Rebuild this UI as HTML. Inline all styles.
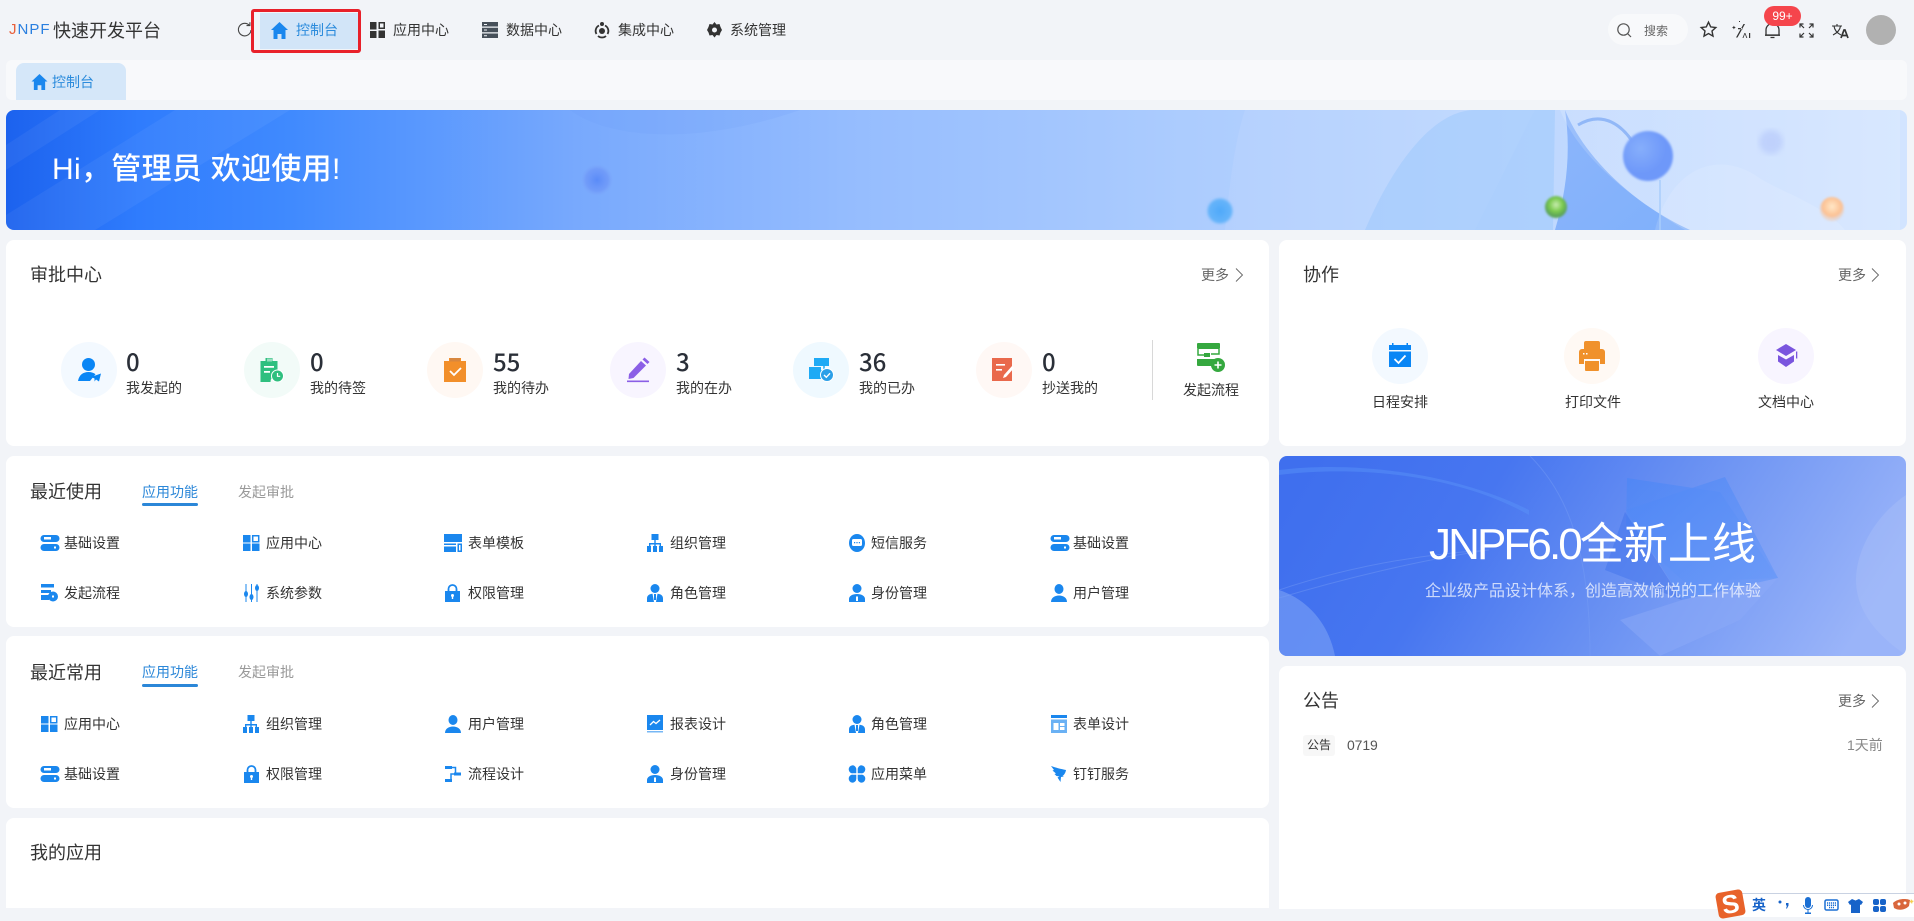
<!DOCTYPE html>
<html lang="zh-CN"><head><meta charset="utf-8"><title>JNPF 快速开发平台</title>
<style>
html,body{margin:0;padding:0}
body{width:1914px;height:917px;position:relative;overflow:hidden;background:#f2f4f8;font-family:"Liberation Sans","Noto Sans CJK SC",sans-serif;color:#333;font-size:14px}
.a,.t,svg.i{position:absolute}
.t{line-height:20px;white-space:nowrap}
.card{position:absolute;background:#fff;border-radius:8px}
.h{font-size:18px;line-height:24px}
.g{color:#666}
.n{font-size:24px;line-height:30px;color:#2a2f38;font-family:"Noto Sans CJK SC",sans-serif;font-weight:500}
svg.i{fill:#1a87ee;overflow:visible}
</style></head><body>

<!-- Top nav -->
<div class="t" style="left:9px;top:20px;font-size:15px;font-weight:400;letter-spacing:1px;color:#2a7fe0"><span style="color:#e8603c">J</span>NPF</div>
<div class="t" style="left:53px;top:21px;font-size:18px;color:#333">快速开发平台</div>
<svg class="i" style="left:237px;top:21px;fill:none;stroke:#444;stroke-width:1.1" width="15" height="18" viewBox="0 0 15 18"><path d="M12.5 4.5A6.3 6.3 0 1 0 14 9"/><path d="M9.5 4.6h3.4V1.2"/></svg>
<div class="a" style="left:251px;top:9px;width:104px;height:38px;border:3px solid #e8202a;border-radius:3px;background:#f2f4f8"></div>
<div class="a" style="left:260px;top:13px;width:98px;height:36px;background:#d2e5f8"></div>
<svg class="i" style="left:271px;top:22px" width="17" height="17" viewBox="0 0 17 17"><path d="M8.5 0 17 8h-2.500v9h-4v-5h-4v5h-4V8H0z"/></svg>
<div class="t" style="left:296px;top:20px;color:#2b8bdc">控制台</div>
<svg class="i" style="left:370px;top:22px;fill:#333" width="15" height="16" viewBox="0 0 15 16"><path d="M0 0h6.500v7.500H0zM8.500 0H15v7h-6.500zM0 9h6.500v7H0zM8.500 8.500H15V16h-6.500z"/><path fill="#f2f4f8" d="M10 1.500h3.500v4H10z"/></svg>
<div class="t" style="left:393px;top:20px">应用中心</div>
<svg class="i" style="left:482px;top:22px;fill:#47505a" width="16" height="16" viewBox="0 0 16 16"><path d="M0 0h16v4.500H0zM0 5.700h16v4.500H0zM0 11.500h16V16H0z"/><path fill="#f2f4f8" d="M2 2h3v1H2zM2 7.500h3v1H2zM2 13.300h3v1H2z"/></svg>
<div class="t" style="left:506px;top:20px">数据中心</div>
<svg class="i" style="left:594px;top:22px;fill:#333" width="16" height="16" viewBox="0 0 16 16"><circle cx="8" cy="9" r="3"/><path fill="none" stroke="#333" stroke-width="1.800" d="M5 3.500A6 6 0 0 0 2.500 12M11 3.500A6 6 0 0 1 13.500 12M4 14a6 6 0 0 0 8 0"/><circle cx="8" cy="2" r="2"/></svg>
<div class="t" style="left:618px;top:20px">集成中心</div>
<svg class="i" style="left:707px;top:22px;fill:#333" width="15" height="16" viewBox="0 0 15 16"><path d="M7.500 0l2 2.500 3-.5 1 3 1.500 3-1.500 2.500-1 3-3-.5-2 2.500-2-2.500-3 .5-1-3L0 8l1.500-3 1-3 3 .5z"/><circle cx="7.500" cy="8" r="2.500" fill="#f2f4f8"/></svg>
<div class="t" style="left:730px;top:20px">系统管理</div>

<div class="a" style="left:1608px;top:14px;width:80px;height:31px;border-radius:16px;background:#f8f9fb"></div>
<svg class="i" style="left:1617px;top:23px;fill:none;stroke:#555;stroke-width:1.200" width="15" height="15" viewBox="0 0 15 15"><circle cx="6.500" cy="6.500" r="5.700"/><path d="M10.700 10.700 14 14"/></svg>
<div class="t" style="left:1644px;top:21px;font-size:12px;color:#666">搜索</div>
<svg class="i" style="left:1700px;top:21px;fill:none;stroke:#333;stroke-width:1.400" width="17" height="17" viewBox="0 0 17 17"><path d="M8.500 1.200l2.200 4.700 5.100.6-3.800 3.500 1 5.100-4.500-2.600L4 15.100l1-5.100L1.200 6.500l5.100-.6z"/></svg>
<svg class="i" style="left:1732px;top:21px;fill:#333" width="19" height="18" viewBox="0 0 19 18"><path d="M0 6.500l1.300-.6.600-1.300.6 1.300 1.300.6-1.300.6-.6 1.300-.6-1.300zM7 0h1v1H7z"/><path d="M11.500 3 4 16.500h1.500L13 3zM6 7h5v1.200H6z"/><path d="M10.500 17l2-5h.8l2 5h-.9l-1.500-4-1.500 4zM17 12h1.200v5H17z"/></svg>
<svg class="i" style="left:1765px;top:22px;fill:none;stroke:#333;stroke-width:1.300" width="15" height="17" viewBox="0 0 15 17"><path d="M1 13V8a6.500 6.500 0 0 1 13 0v5z"/><path d="M0 13.200h15M5.500 15.500h4"/></svg>
<div class="a" style="left:1764px;top:6px;width:37px;height:20px;border-radius:10px;background:#f5454c;color:#fff;font-size:12px;line-height:20px;text-align:center">99+</div>
<svg class="i" style="left:1799px;top:23px;fill:none;stroke:#333;stroke-width:1.200" width="15" height="15" viewBox="0 0 15 15"><path d="M1 4.500V1h3.500M1 1l4 4M14 4.500V1h-3.500M14 1l-4 4M1 10.500V14h3.500M1 14l4-4M14 10.500V14h-3.500M14 14l-4-4"/></svg>
<svg class="i" style="left:1832px;top:24px;fill:none;stroke:#333;stroke-width:1.100" width="17" height="14" viewBox="0 0 17 14"><path d="M0 2h10M5 0v2M2 2c.5 4 3 7 7 9M8.500 2c-.5 4-3.500 7-7.500 9"/><path stroke-width="1.700" d="M9 14l3-8h1l3 8M10.300 11.500h4.400"/></svg>
<div class="a" style="left:1866px;top:15px;width:30px;height:30px;border-radius:50%;background:#b1b1b1"></div>

<!-- Tab bar -->
<div class="a" style="left:6px;top:60px;width:1901px;height:40px;background:#f8f9fb;border-radius:6px"></div>
<div class="a" style="left:16px;top:63px;width:110px;height:37px;background:#d5e7f9;border-radius:8px 8px 0 0"></div>
<svg class="i" style="left:31px;top:74px" width="17" height="16" viewBox="0 0 17 17"><path d="M8.500 0 17 8h-2.500v9h-4v-5h-4v5h-4V8H0z"/></svg>
<div class="t" style="left:52px;top:72px;color:#2b8bdc">控制台</div>

<!-- Banner -->
<svg class="a" style="left:6px;top:110px;border-radius:8px" width="1901" height="120" viewBox="6 110 1901 120">
<defs>
<linearGradient id="bg" x1="0" x2="1" y1="0" y2="0"><stop offset="0" stop-color="#1c62ee"/><stop offset=".07" stop-color="#2f7cfd"/><stop offset=".15" stop-color="#408afe"/><stop offset=".3" stop-color="#78a9fd"/><stop offset=".45" stop-color="#96bdfe"/><stop offset=".62" stop-color="#acccfe"/><stop offset="1" stop-color="#d2e4ff"/></linearGradient>
<linearGradient id="pet" x1="0" x2="1" y1="0" y2="1"><stop offset="0" stop-color="#8cb5fb"/><stop offset="1" stop-color="#7fb0fb"/></linearGradient>
<radialGradient id="s1"><stop offset="0" stop-color="#5a8bf8"/><stop offset=".7" stop-color="#6e97f8" stop-opacity=".75"/><stop offset="1" stop-color="#7aa2f8" stop-opacity="0"/></radialGradient>
<radialGradient id="s2"><stop offset="0" stop-color="#4fa9f9"/><stop offset=".8" stop-color="#66b4fa"/><stop offset="1" stop-color="#7abcfb" stop-opacity="0"/></radialGradient>
<radialGradient id="s3" cx=".5" cy=".4"><stop offset="0" stop-color="#c8ecb0"/><stop offset=".6" stop-color="#7ccb4e"/><stop offset="1" stop-color="#5da55a"/></radialGradient>
<radialGradient id="s4" cx=".5" cy=".4"><stop offset="0" stop-color="#ffe8c8"/><stop offset=".8" stop-color="#fcc092"/><stop offset="1" stop-color="#f5c6a4" stop-opacity=".5"/></radialGradient>
<radialGradient id="s5" cx=".35" cy=".35"><stop offset="0" stop-color="#86aefb"/><stop offset="1" stop-color="#6e98f9"/></radialGradient>
<filter id="bl"><feGaussianBlur stdDeviation="1"/></filter>
<filter id="bl2"><feGaussianBlur stdDeviation="3"/></filter>
</defs>
<rect x="6" y="110" width="1901" height="120" fill="url(#bg)"/>
<path d="M6 170 100 110H60L6 145zM6 215 175 110H290L95 230H6z" fill="#fff" opacity=".05"/>
<path d="M570 110c40 30 130 35 230 0z" fill="#5f94f5" opacity=".12"/>
<path d="M1225 230c5-50 10-90 20-120h290l-60 120z" fill="#fff" opacity=".08"/>
<path d="M1365 230c30-70 70-120 110-120h80l-2 120z" fill="#9cc8fc" opacity=".5"/>
<path d="M1555 230c12-40 16-80 10-120 16 40 60 90 125 120z" fill="url(#pet)"/>
<path d="M1560 110h340v120h-215c-50-30-105-70-125-120z" fill="#fff" opacity=".15"/>
<path d="M1655 230c15-60 60-80 100-55 20 15 70 30 90 55z" fill="#fff" opacity=".12"/>
<path d="M1578 125c25-15 45 0 58 22" fill="none" stroke="#79a6f4" stroke-width="3" opacity=".7"/>
<path d="M1660 180v50" stroke="#a9cdfb" stroke-width="1.500"/>
<circle cx="597" cy="180" r="16" fill="url(#s1)"/>
<circle cx="1220" cy="211" r="14" fill="url(#s2)" filter="url(#bl)"/>
<circle cx="1648" cy="156" r="25" fill="url(#s5)" filter="url(#bl)"/>
<circle cx="1556" cy="207" r="11" fill="url(#s3)" filter="url(#bl)"/>
<circle cx="1832" cy="209" r="12" fill="url(#s4)" filter="url(#bl)"/>
<circle cx="1771" cy="142" r="12" fill="#b3c6fb" opacity=".6" filter="url(#bl2)"/>
</svg>
<div class="t" style="left:52px;top:150px;line-height:40px;font-size:30px;font-weight:500;letter-spacing:.3px;color:#fff">Hi，管理员 欢迎使用!</div>

<!-- Card 1 审批中心 -->
<div class="card" style="left:6px;top:240px;width:1263px;height:206px"></div>
<div class="t h" style="left:30px;top:263px">审批中心</div>
<div class="t g" style="left:1201px;top:265px">更多</div>
<svg class="i" style="left:1235px;top:268px;fill:none;stroke:#666;stroke-width:.9" width="8" height="14" viewBox="0 0 8 14"><path d="M1 .5 7.500 7 1 13.500"/></svg>

<svg class="i" style="left:61px;top:342px" width="56" height="56" viewBox="0 0 56 56"><circle cx="28" cy="28" r="28" fill="#f3f9ff"/><circle cx="27.500" cy="22.500" r="6.500" fill="#0a86f5"/><path d="M17 39c1-6 5-9 10.500-9 3 0 5 .8 7 2.300L29 39z" fill="#0a86f5"/><path d="M40 31.500 38 39.500l-3-2-1.500 2v-3l-3.500-1.500z" fill="#0a86f5"/></svg>
<svg class="i" style="left:244px;top:342px" width="56" height="56" viewBox="0 0 56 56"><circle cx="28" cy="28" r="28" fill="#f2fbf8"/><path d="M16.500 19h5v-3h7v3h5v14a7 7 0 0 0-7 7h-10z" fill="#2fbf7f"/><path d="M23 16.500h5v3h-5z" fill="#fff" opacity=".5"/><path d="M20 24h10v1.800H20zM20 29h6v1.800h-6z" fill="#fff"/><circle cx="33.500" cy="34" r="6" fill="#2fbf7f" stroke="#fff" stroke-width="1"/><path d="M33.500 31v3.300h2.700" fill="none" stroke="#fff" stroke-width="1.200"/></svg>
<svg class="i" style="left:427px;top:342px" width="56" height="56" viewBox="0 0 56 56"><circle cx="28" cy="28" r="28" fill="#fff8f3"/><path d="M17 19h5v-3h12v3h5v21H17z" fill="#f28f2a"/><path d="M23 16h10v3.500H23z" fill="#d8873f"/><path d="m23 29 4 4 7-7" fill="none" stroke="#fff" stroke-width="1.800"/></svg>
<svg class="i" style="left:610px;top:342px" width="56" height="56" viewBox="0 0 56 56"><circle cx="28" cy="28" r="28" fill="#f8f5ff"/><path d="M19 32 31 19l5 4.500-12.500 12.500-5 1z" fill="#8b5fe6"/><path d="M32.500 17.500l2-2 5 4.500-2 2z" fill="#8b5fe6"/><path d="M17 38.500h22v1.600H17z" fill="#8b5fe6"/></svg>
<svg class="i" style="left:793px;top:342px" width="56" height="56" viewBox="0 0 56 56"><circle cx="28" cy="28" r="28" fill="#eff9ff"/><path d="M21 16h15v8H21zM16 25h12v12H16z" fill="#1eaaf5"/><path d="M31 24v5h-3" fill="none" stroke="#1eaaf5" stroke-width="1.500"/><circle cx="34" cy="33" r="6.500" fill="#2b9fe8" stroke="#fff"/><path d="m31 33 2.300 2.300 3.700-4" fill="none" stroke="#fff" stroke-width="1.400"/></svg>
<svg class="i" style="left:976px;top:342px" width="56" height="56" viewBox="0 0 56 56"><circle cx="28" cy="28" r="28" fill="#fff8f5"/><path d="M16 16h20v23H16z" fill="#e9694c"/><path d="M20 22h9v1.600h-9zM20 27h6v1.600h-6z" fill="#fff"/><path d="m27 36 1-3 8-9 2 2-8 9z" fill="#fff"/></svg>

<div class="t n" style="left:126px;top:346px">0</div><div class="t" style="left:126px;top:378px">我发起的</div>
<div class="t n" style="left:310px;top:346px">0</div><div class="t" style="left:310px;top:378px">我的待签</div>
<div class="t n" style="left:493px;top:346px">55</div><div class="t" style="left:493px;top:378px">我的待办</div>
<div class="t n" style="left:676px;top:346px">3</div><div class="t" style="left:676px;top:378px">我的在办</div>
<div class="t n" style="left:859px;top:346px">36</div><div class="t" style="left:859px;top:378px">我的已办</div>
<div class="t n" style="left:1042px;top:346px">0</div><div class="t" style="left:1042px;top:378px">抄送我的</div>
<div class="a" style="left:1152px;top:340px;width:1px;height:60px;background:#d8d8d8"></div>
<svg class="i" style="left:1197px;top:343px;fill:#35a83f" width="29" height="29" viewBox="0 0 29 29"><path d="M0 1a1 1 0 0 1 1-1h21a1 1 0 0 1 1 1v4a1 1 0 0 1-1 1H1a1 1 0 0 1-1-1z"/><path d="M1 6v6h6M22 6v5h-8" fill="none" stroke="#35a83f" stroke-width="1.500"/><path d="M7 10h6v4H7z"/><path d="M0 16h23a8 8 0 0 0-7 7H1a1 1 0 0 1-1-1z"/><circle cx="21" cy="22" r="7"/><path d="M17.500 21.200h2.700v-2.700h1.600v2.700h2.700v1.600h-2.700v2.700h-1.600v-2.700h-2.700z" fill="#fff"/></svg>
<div class="t" style="left:1183px;top:380px">发起流程</div>

<!-- Card 2 最近使用 -->
<div class="card" style="left:6px;top:456px;width:1263px;height:171px"></div>
<div class="t h" style="left:30px;top:480px">最近使用</div>
<div class="t" style="left:142px;top:482px;color:#2b87d8">应用功能</div>
<div class="a" style="left:142px;top:503px;width:56px;height:3px;border-radius:2px;background:#2b87d8"></div>
<div class="t" style="left:238px;top:482px;color:#999">发起审批</div>

<svg class="i" style="left:41px;top:534px" width="18" height="18" viewBox="0 0 18 18"><path d="M3 1h12a3 3 0 0 1 0 7H3a3 3 0 0 1 0-7zM3 10h12a3.500 3.500 0 0 1 0 7H3a3.500 3.500 0 0 1 0-7z"/><path fill="#fff" d="M3 3h7v2.500H3zM13 12.500h2v2h-2z"/></svg>
<div class="t" style="left:64px;top:533px">基础设置</div>
<svg class="i" style="left:243px;top:534px" width="17" height="18" viewBox="0 0 17 18"><path d="M0 1h7.500v7.500H0zM9 9.500h7.500V17H9zM0 9.500h7.500V17H0z"/><path fill="none" stroke="#1a87ee" stroke-width="1.500" d="M9.700 1.700h6v6h-6z"/></svg>
<div class="t" style="left:266px;top:533px">应用中心</div>
<svg class="i" style="left:444px;top:534px" width="18" height="18" viewBox="0 0 18 18"><path d="M0 0h18v8H0zM0 9.500h12V11H0zM0 12.500h12V18H0zM13.500 9.500H18V18h-4.500z"/><path fill="#fff" d="M15 11h1.500v5.500H15z"/></svg>
<div class="t" style="left:468px;top:533px">表单模板</div>
<svg class="i" style="left:647px;top:534px" width="16" height="18" viewBox="0 0 16 18"><path d="M4.500 0h7v6h-7zM0 12h4v6H0zM6 12h4v6H6zM12 12h4v6h-4zM7.300 6h1.400v3H14v3h-1.400v-1.500H8.700V12H7.300v-1.500H3.400V12H2V9h5.300z"/></svg>
<div class="t" style="left:670px;top:533px">组织管理</div>
<svg class="i" style="left:849px;top:534px" width="16" height="18" viewBox="0 0 16 18"><ellipse cx="8" cy="9" rx="8" ry="9"/><rect x="3" y="5" width="10" height="7" rx="1.500" fill="#fff"/><path d="M5 8h1.200v1.200H5zM7.400 8h1.200v1.200H7.400zM9.800 8H11v1.200H9.800z"/></svg>
<div class="t" style="left:871px;top:533px">短信服务</div>
<svg class="i" style="left:1051px;top:534px" width="18" height="18" viewBox="0 0 18 18"><path d="M3 1h12a3 3 0 0 1 0 7H3a3 3 0 0 1 0-7zM3 10h12a3.500 3.500 0 0 1 0 7H3a3.500 3.500 0 0 1 0-7z"/><path fill="#fff" d="M3 3h7v2.500H3zM13 12.500h2v2h-2z"/></svg>
<div class="t" style="left:1073px;top:533px">基础设置</div>

<svg class="i" style="left:41px;top:584px" width="17" height="18" viewBox="0 0 17 18"><path d="M0 0h13v3.500H0zM0 6h10v3H0zM0 11h8v5H0z"/><circle cx="12" cy="12.500" r="5"/><path fill="#fff" d="M11 11.500h2v2h-2z"/></svg>
<div class="t" style="left:64px;top:583px">发起流程</div>
<svg class="i" style="left:244px;top:584px" width="15" height="18" viewBox="0 0 15 18"><path d="M1.500 0h1v18h-1zM7 0h1v18H7zM12.500 0h1v18h-1z"/><ellipse cx="2" cy="10" rx="2" ry="3"/><ellipse cx="7.500" cy="13" rx="2" ry="3"/><ellipse cx="13" cy="4" rx="2" ry="3"/></svg>
<div class="t" style="left:266px;top:583px">系统参数</div>
<svg class="i" style="left:445px;top:584px" width="15" height="18" viewBox="0 0 15 18"><path d="M0 7h15v11H0z"/><path fill="none" stroke="#1a87ee" stroke-width="1.800" d="M3.500 7.500V5a4 4 0 0 1 8 0v2.500"/><circle cx="7.500" cy="11.500" r="1.500" fill="#fff"/><path fill="#fff" d="M6.800 12h1.400v3H6.800z"/></svg>
<div class="t" style="left:468px;top:583px">权限管理</div>
<svg class="i" style="left:647px;top:584px" width="16" height="18" viewBox="0 0 16 18"><circle cx="8" cy="4.500" r="4.500"/><path d="M0 18v-3.500C0 11 3 10 5.500 9.800L7 18zM16 18v-3.500c0-3.500-3-4.500-5.500-4.700L9 18zM7 10h2v6H7z"/></svg>
<div class="t" style="left:670px;top:583px">角色管理</div>
<svg class="i" style="left:849px;top:584px" width="16" height="18" viewBox="0 0 16 18"><circle cx="8" cy="4.500" r="4.500"/><path d="M0 18v-3c0-3 3.500-5 8-5s8 2 8 5v3z"/><path fill="#fff" d="M7 12.500h2V17H7z"/></svg>
<div class="t" style="left:871px;top:583px">身份管理</div>
<svg class="i" style="left:1051px;top:584px" width="16" height="18" viewBox="0 0 16 18"><ellipse cx="8" cy="5" rx="4.500" ry="5"/><path d="M0 18c0-4 3.500-6.500 8-6.500s8 2.500 8 6.500z"/></svg>
<div class="t" style="left:1073px;top:583px">用户管理</div>

<!-- Card 3 最近常用 -->
<div class="card" style="left:6px;top:636px;width:1263px;height:172px"></div>
<div class="t h" style="left:30px;top:661px">最近常用</div>
<div class="t" style="left:142px;top:662px;color:#2b87d8">应用功能</div>
<div class="a" style="left:142px;top:684px;width:56px;height:3px;border-radius:2px;background:#2b87d8"></div>
<div class="t" style="left:238px;top:662px;color:#999">发起审批</div>

<svg class="i" style="left:41px;top:715px" width="17" height="18" viewBox="0 0 17 18"><path d="M0 1h7.500v7.500H0zM9 9.500h7.500V17H9zM0 9.500h7.500V17H0z"/><path fill="none" stroke="#1a87ee" stroke-width="1.500" d="M9.700 1.700h6v6h-6z"/></svg>
<div class="t" style="left:64px;top:714px">应用中心</div>
<svg class="i" style="left:243px;top:715px" width="16" height="18" viewBox="0 0 16 18"><path d="M4.500 0h7v6h-7zM0 12h4v6H0zM6 12h4v6H6zM12 12h4v6h-4zM7.300 6h1.400v3H14v3h-1.400v-1.500H8.700V12H7.300v-1.500H3.400V12H2V9h5.300z"/></svg>
<div class="t" style="left:266px;top:714px">组织管理</div>
<svg class="i" style="left:445px;top:715px" width="16" height="18" viewBox="0 0 16 18"><ellipse cx="8" cy="5" rx="4.500" ry="5"/><path d="M0 18c0-4 3.500-6.500 8-6.500s8 2.500 8 6.500z"/></svg>
<div class="t" style="left:468px;top:714px">用户管理</div>
<svg class="i" style="left:647px;top:715px" width="16" height="18" viewBox="0 0 16 18"><path d="M0 0h16v15H0z"/><path d="M0 16h16v1.500H0z" opacity=".6"/><path fill="none" stroke="#fff" stroke-width="1.300" d="m3 10 3.500-3.500 2.500 2L13 5"/></svg>
<div class="t" style="left:670px;top:714px">报表设计</div>
<svg class="i" style="left:849px;top:715px" width="16" height="18" viewBox="0 0 16 18"><circle cx="8" cy="4.500" r="4.500"/><path d="M0 18v-3.500C0 11 3 10 5.500 9.800L7 18zM16 18v-3.500c0-3.500-3-4.500-5.500-4.700L9 18zM7 10h2v6H7z"/></svg>
<div class="t" style="left:871px;top:714px">角色管理</div>
<svg class="i" style="left:1051px;top:715px" width="16" height="18" viewBox="0 0 16 18"><path d="M0 0h16v3H0z"/><path d="M0 4.500h16V18H0z" opacity=".65"/><path fill="#fff" d="M2.500 8h5v7h-5zM9 8h4.500v3H9zM9 12h4.500v3H9z"/></svg>
<div class="t" style="left:1073px;top:714px">表单设计</div>

<svg class="i" style="left:41px;top:765px" width="18" height="18" viewBox="0 0 18 18"><path d="M3 1h12a3 3 0 0 1 0 7H3a3 3 0 0 1 0-7zM3 10h12a3.500 3.500 0 0 1 0 7H3a3.500 3.500 0 0 1 0-7z"/><path fill="#fff" d="M3 3h7v2.500H3zM13 12.500h2v2h-2z"/></svg>
<div class="t" style="left:64px;top:764px">基础设置</div>
<svg class="i" style="left:244px;top:765px" width="15" height="18" viewBox="0 0 15 18"><path d="M0 7h15v11H0z"/><path fill="none" stroke="#1a87ee" stroke-width="1.800" d="M3.500 7.500V5a4 4 0 0 1 8 0v2.500"/><circle cx="7.500" cy="11.500" r="1.500" fill="#fff"/><path fill="#fff" d="M6.800 12h1.400v3H6.800z"/></svg>
<div class="t" style="left:266px;top:764px">权限管理</div>
<svg class="i" style="left:445px;top:765px" width="16" height="18" viewBox="0 0 16 18"><path d="M0 1h7v3H0zM9 7.500h7v3H9zM0 14h7v3H0z"/><path fill="none" stroke="#1a87ee" stroke-width="1.500" d="M7 2.500h3.500V9H6v6.500H5"/><path d="M13 5.500 16 9l-3 3.500z" opacity="0"/></svg>
<div class="t" style="left:468px;top:764px">流程设计</div>
<svg class="i" style="left:647px;top:765px" width="16" height="18" viewBox="0 0 16 18"><circle cx="8" cy="4.500" r="4.500"/><path d="M0 18v-3c0-3 3.500-5 8-5s8 2 8 5v3z"/><path fill="#fff" d="M7 12.500h2V17H7z"/></svg>
<div class="t" style="left:670px;top:764px">身份管理</div>
<svg class="i" style="left:849px;top:765px" width="16" height="18" viewBox="0 0 16 18"><path d="M7.300 8.300H3.800a3.800 4 0 1 1 3.500-4zM8.700 8.300h3.500a3.800 4 0 1 0-3.500-4zM7.300 9.700H3.800a3.800 4 0 1 0 3.500 4zM8.700 9.700h3.500a3.800 4 0 1 1-3.500 4z"/></svg>
<div class="t" style="left:871px;top:764px">应用菜单</div>
<svg class="i" style="left:1051px;top:765px" width="16" height="18" viewBox="0 0 16 18"><path d="M0 1c4 1.500 10 3 15 4-.5 3-2 5-3.500 6l1.500.5-3 .5-.5 5-3-4.500 2-1-3-.5L3.500 9 5 8.500 1.500 5.500 3 5z"/></svg>
<div class="t" style="left:1073px;top:764px">钉钉服务</div>

<!-- Card 4 我的应用 -->
<div class="card" style="left:6px;top:818px;width:1263px;height:90px;border-radius:8px 8px 0 0"></div>
<div class="t h" style="left:30px;top:841px">我的应用</div>

<!-- Right col: 协作 -->
<div class="card" style="left:1279px;top:240px;width:627px;height:206px"></div>
<div class="t h" style="left:1303px;top:263px">协作</div>
<div class="t g" style="left:1838px;top:265px">更多</div>
<svg class="i" style="left:1871px;top:268px;fill:none;stroke:#666;stroke-width:.9" width="8" height="14" viewBox="0 0 8 14"><path d="M1 .5 7.500 7 1 13.500"/></svg>

<svg class="i" style="left:1372px;top:328px" width="56" height="56" viewBox="0 0 56 56"><circle cx="28" cy="28" r="28" fill="#f3f9ff"/><path d="M17 17h22v5H17z" fill="#0a86f5"/><path d="M20 15h1.500v3H20zM34.500 15H36v3h-1.500z" fill="#0a86f5"/><path d="M17 23.500h22V39H17z" fill="#0a86f5"/><path d="m22.500 31 4 4 7-7.500" fill="none" stroke="#fff" stroke-width="1.800"/></svg>
<svg class="i" style="left:1564px;top:328px" width="56" height="56" viewBox="0 0 56 56"><circle cx="28" cy="28" r="28" fill="#fff9f4"/><path d="M20 15a2 2 0 0 1 2-2h12a2 2 0 0 1 2 2v7H20z" fill="#f0912b"/><path d="M15 24a3 3 0 0 1 3-3h20a3 3 0 0 1 3 3v12h-5v-5H20v5h-5z" fill="#f0912b"/><path d="M21 33h14v9a1 1 0 0 1-1 1H22a1 1 0 0 1-1-1z" fill="#f0912b"/><path d="M19 25h1.500v1.500H19zM22 25h1.500v1.500H22z" fill="#fff"/></svg>
<svg class="i" style="left:1758px;top:328px" width="56" height="56" viewBox="0 0 56 56"><circle cx="28" cy="28" r="28" fill="#f8f5ff"/><path d="M28 16 38 22 28 28 18 22z" fill="#7a55de"/><path d="M20 27 28 31.500 36 27v6.500L28 39l-8-5.500z" fill="#7a55de"/><path d="M38 23.500h1.300v7H38z" fill="#7a55de"/></svg>
<div class="t" style="left:1372px;top:392px">日程安排</div>
<div class="t" style="left:1565px;top:392px">打印文件</div>
<div class="t" style="left:1758px;top:392px">文档中心</div>

<!-- JNPF blue banner -->
<svg class="a" style="left:1279px;top:456px;border-radius:8px" width="627" height="200" viewBox="1279 456 627 200">
<defs>
<linearGradient id="b2" x1="0" y1=".3" x2="1" y2=".5"><stop offset="0" stop-color="#3f6fee"/><stop offset=".3" stop-color="#4776f0"/><stop offset=".65" stop-color="#7096f3"/><stop offset="1" stop-color="#9ab4f9"/></linearGradient>
<linearGradient id="cu" x1="0" y1="0" x2="1" y2="1"><stop offset="0" stop-color="#4d86f5"/><stop offset="1" stop-color="#6d9bf8"/></linearGradient>
</defs>
<rect x="1279" y="456" width="627" height="200" fill="url(#b2)"/>
<path d="M1279 475c80-10 180 0 250 40v-5c-70-35-170-50-250-40z" fill="#5b94f8" opacity=".45"/>
<path d="M1279 590c60-20 130-35 210-40-70 10-150 30-210 48zM1530 456c30 30 60 80 60 200" fill="none" stroke="#7ba0f5" stroke-width="1" opacity=".4"/>
<path d="M1279 590c30 10 50 35 56 66h-56z" fill="#7ba2f5" opacity=".6"/>
<path d="M1627 478 1720 492 1778 578 1730 580 1700 596 1626 530z" fill="url(#cu)" opacity=".75"/>
<path d="M1626 510 1725 477 1778 578 1682 600z" fill="url(#cu)" opacity=".75"/>
<path d="M1625 512 1605 570 1682 600z" fill="#3f70ea" opacity=".45"/>
<path d="M1682 600 1778 578 1740 620 1660 656 1620 620z" fill="#8ba9f7" opacity=".5"/>
<path d="M1906 495c-30 20-50 55-50 85 0 30 20 55 50 75z" fill="#a8bff9" opacity=".45"/>
</svg>
<div class="t" style="left:1429px;top:520px;line-height:50px;font-size:44px;color:#fff"><span style="letter-spacing:-2.900px">JNPF6.0</span>全新上线</div>
<div class="t" style="left:1425px;top:582px;font-size:16px;color:#fff;opacity:.72">企业级产品设计体系，创造高效愉悦的工作体验</div>

<!-- 公告 -->
<div class="card" style="left:1279px;top:666px;width:627px;height:243px;border-radius:8px 8px 0 0"></div>
<div class="t h" style="left:1303px;top:689px">公告</div>
<div class="t g" style="left:1838px;top:691px">更多</div>
<svg class="i" style="left:1871px;top:694px;fill:none;stroke:#666;stroke-width:.9" width="8" height="14" viewBox="0 0 8 14"><path d="M1 .5 7.500 7 1 13.500"/></svg>
<div class="a" style="left:1303px;top:735px;width:32px;height:21px;background:#f7f7f7;border-radius:3px"></div>
<div class="t" style="left:1307px;top:735px;font-size:12px">公告</div>
<div class="t" style="left:1347px;top:735px;font-size:14px;color:#555;letter-spacing:-.1px">0719</div>
<div class="t" style="left:1847px;top:735px;color:#888">1天前</div>

<!-- IME toolbar -->
<div class="a" style="left:1740px;top:893px;width:174px;height:24px;background:#fff;border-top:1px solid #c9d2e2;box-sizing:border-box"></div>
<div class="a" style="left:1717px;top:891px;width:27px;height:26px;background:#e8622a;border-radius:4px;transform:rotate(-10deg);color:#fff;font-weight:700;font-size:26px;line-height:26px;text-align:center">S</div>
<div class="t" style="left:1752px;top:895px;font-size:14px;font-weight:700;color:#1763c9">英</div>
<svg class="i" style="left:1778px;top:900px;fill:#1763c9" width="12" height="10" viewBox="0 0 12 10"><circle cx="2" cy="2" r="1.500"/><path d="M8 3h2.500v2.500L9 8.500H8L9 5.500H8z"/></svg>
<svg class="i" style="left:1803px;top:897px;fill:#1a6fd4" width="10" height="18" viewBox="0 0 10 18"><rect x="2" y="0" width="6" height="11" rx="3"/><path d="M.5 8a4.500 4.500 0 0 0 9 0" fill="none" stroke="#1a6fd4"/><path d="M4.500 12.500h1v3h-1zM2 15.500h6V17H2z"/></svg>
<svg class="i" style="left:1824px;top:899px;fill:none;stroke:#1a6fd4;stroke-width:1.500" width="15" height="12" viewBox="0 0 15 12"><rect x="1" y="1" width="13" height="10" rx="1.500"/><path d="M3 4h9M3 6.200h9M5 8.500h5" stroke-dasharray="1.200 .8"/></svg>
<svg class="i" style="left:1848px;top:899px;fill:#1763c9" width="15" height="14" viewBox="0 0 15 14"><path d="M4 0 7.500 1.500 11 0l4 3-2 3-1-.5V14H3V5.500L2 6 0 3z"/></svg>
<svg class="i" style="left:1873px;top:899px;fill:#1763c9" width="13" height="13" viewBox="0 0 13 13"><rect width="6" height="6" rx="2"/><rect x="7" width="6" height="6" rx="2"/><rect y="7" width="6" height="6" rx="2"/><rect x="7" y="7" width="6" height="6" rx="2"/></svg>
<svg class="i" style="left:1893px;top:898px" width="21" height="15" viewBox="0 0 21 15"><path d="M0 5c4-4 12-5 17-3l-1 6c-4 4-10 5-15 2z" fill="#d9663c"/><circle cx="6" cy="6" r="1.500" fill="#fff"/><circle cx="12" cy="5" r="1.500" fill="#fff"/><path d="M18 1l1 1.500L21 3l-1.500 1L19 6l-1-1.500L16 4l1.500-1z" fill="#f5cd4d"/></svg>
</body></html>
